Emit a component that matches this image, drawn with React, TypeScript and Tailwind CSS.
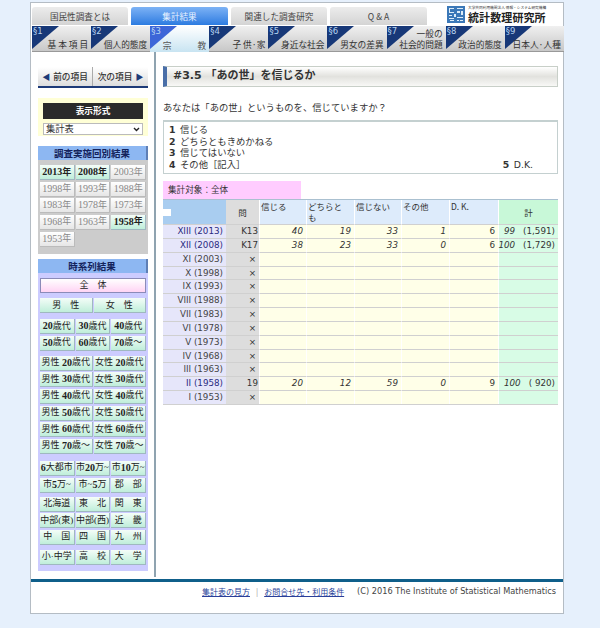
const font = { fontFamily: '"DejaVu Sans","Noto Sans CJK JP",sans-serif' };
const jp = { fontFamily: '"Noto Sans CJK JP",sans-serif' };
const serif = { fontFamily: '"Liberation Serif","Noto Sans CJK JP",serif' };

const sections = [
  ["§1", "基 本 項 目"], ["§2", "個人的態度"], ["§3", "宗　　　教"], ["§4", "子 供·家"], ["§5", "身近な社会"],
  ["§6", "男女の差異"], ["§7", "一般の\n社会的問題"], ["§8", "政治的態度"], ["§9", "日本人·人種"],
];

function Btn({ t, kind = "on" }: { t: string; kind?: "on" | "off" }) {
  const cls = kind === "on"
    ? "bg-gradient-to-b from-[#f4fdf8] to-[#bfeeda] text-[#222] border-[#9fb8c0]"
    : "bg-gradient-to-b from-white to-[#e6e6e6] text-[#888] border-[#bbbbbb]";
  return (
    <div className={`h-[15px] flex items-center justify-center border-b border-r whitespace-pre overflow-hidden text-[9px] leading-none ${cls}`} style={serif}>
      {t.split(/(\d+)/).map((p, i) =>
        /\d/.test(p)
          ? <span key={i} className={`text-[10px] ${kind === "on" ? "font-bold" : ""}`}>{p}</span>
          : <span key={i} className={kind === "on" && t.endsWith("年") ? "font-bold" : ""}>{p}</span>
      )}
    </div>
  );
}

function G({ cols, items, gap = "mt-[5px]" }: { cols: 2 | 3; items: string[]; gap?: string }) {
  return (
    <div className={`grid ${cols === 2 ? "grid-cols-2" : "grid-cols-3"} gap-x-px gap-y-[1.67px] ${gap}`}>
      {items.map((t) => <Btn key={t} t={t} />)}
    </div>
  );
}

const PanelHead = ({ t }: { t: string }) => (
  <div className="h-[14px] bg-[#8db7f2] border-r-2 border-[#5f7fb5] text-center text-[9.5px] leading-[14px] font-bold text-[#14235c]" style={jp}>{t}</div>
);

const rows: [string, string, string[], string, string, boolean][] = [
  ["XIII (2013)", "K13", ["40", "19", "33", "1", "6"], "99", "(1,591)", true],
  ["XII (2008)", "K17", ["38", "23", "33", "0", "6"], "100", "(1,729)", true],
  ["XI (2003)", "×", [], "", "", false],
  ["X (1998)", "×", [], "", "", false],
  ["IX (1993)", "×", [], "", "", false],
  ["VIII (1988)", "×", [], "", "", false],
  ["VII (1983)", "×", [], "", "", false],
  ["VI (1978)", "×", [], "", "", false],
  ["V (1973)", "×", [], "", "", false],
  ["IV (1968)", "×", [], "", "", false],
  ["III (1963)", "×", [], "", "", false],
  ["II (1958)", "19", ["20", "12", "59", "0", "9"], "100", "( 920)", true],
  ["I (1953)", "×", [], "", "", false],
];

const years = ["2013年", "2008年", "2003年", "1998年", "1993年", "1988年", "1983年", "1978年", "1973年", "1968年", "1963年", "1958年", "1953年"];
const onYears = ["2013年", "2008年", "1958年"];

function LogoMark() {
  return (
    <svg width="18" height="17" viewBox="0 0 18 17" className="shrink-0">
      <rect width="18" height="17" fill="#3b78b8" />
      <path d="M2 2h5v1H3v3h4v1H2zM10 2h6v1h-6zM10 5h3v2h-3zM14 5h2v4h-2zM2 9h3v1H2zM7 8h2v3H7zM2 12h5v1H2zM10 11h6v1h-6zM3 14h4v1H3zM10 14h2v1h-2zM13 14h3v1h-3z" fill="#dcecf8" />
    </svg>
  );
}

const cols = "grid grid-cols-[63px_33px_47px_48px_47px_48px_49px_60px]";
const Num = ({ n }: { n: number }) => <b className="inline-block w-[11px]" style={font}>{n}</b>;

export default function App() {
  return (
    <div className="w-[600px] h-[628px] overflow-hidden bg-[#e6f0fc] text-[#333] text-[10px] pt-[2px]" style={font}>
      <div className="ml-[30px] w-[534px] h-[612px] bg-white border border-[#b4bcc4] flex flex-col">
        {/* top nav */}
        <div className="h-[23px] flex items-end">
          <div className="flex pl-px pb-px">
            {[["国民性調査とは", 96], ["集計結果", 97], ["関連した調査研究", 96], ["Q & A", 97]].map(([t, w], i) => (
              <div key={t as string} style={{ width: w as number, ...jp }}
                className={`h-[18px] mr-[3px] rounded-t-[3px] flex items-center justify-center text-[8.6px] ${i === 1 ? "bg-gradient-to-b from-[#7cb2f5] to-[#2b7be0] text-[#e8f2ff]" : "bg-gradient-to-b from-[#ececec] to-[#d4d4d4] text-[#444]"}`}>
                {t}
              </div>
            ))}
          </div>
          <div className="ml-[17px] flex items-center gap-[3px] h-[22px] pb-px">
            <LogoMark />
            <div style={jp}>
              <div className="text-[3.7px] leading-[6px] text-[#333] whitespace-nowrap">大学共同利用機関法人 情報・システム研究機構</div>
              <div className="text-[11px] leading-[13px] font-bold text-[#222] whitespace-nowrap tracking-[0.1px]">統計数理研究所</div>
            </div>
          </div>
        </div>
        {/* section tabs */}
        <div className="flex h-[26px] ml-px">
          {sections.map(([n, t], i) => {
            const on = i === 2;
            return (
              <div key={n} className={`relative w-[59.1px] h-[26px] shrink-0 ${on ? "bg-gradient-to-b from-white to-[#c8e4f2]" : "bg-gradient-to-b from-[#f0f0f0] to-[#c8c8c8] border-b border-[#999]"}`}>
                <svg width="27" height="23" viewBox="0 0 27 23" className="absolute left-0 top-0">
                  <polygon points="0,0 27,0 0,23" fill={on ? "#3d66d8" : "#173878"} />
                </svg>
                <span className="absolute left-px top-0 text-[8.5px] leading-[11px] text-[#b8d4f0]">{n}</span>
                <div className={`absolute right-[3px] bottom-px text-right whitespace-pre text-[8.7px] leading-[11px] ${on ? "text-[#555]" : "text-[#333]"}`} style={jp}>{t}</div>
              </div>
            );
          })}
        </div>
        {/* body */}
        <div className="flex flex-1">
          <aside className="w-[125px] shrink-0 border-r-2 border-[#8fa3b0] pl-[7px] pt-[15px] h-[525px]">
            <div className="w-[110px]" style={jp}>
              <div className="flex h-[21px] border-b-2 border-[#1d3a78] bg-gradient-to-b from-white to-[#dddddd] font-medium text-[8.7px] text-[#333]">
                <div className="w-[55px] flex items-center justify-center gap-[3px] border-r border-[#aaa]"><span className="text-[#1d3a78] text-[8px]">◀</span>前の項目</div>
                <div className="w-[55px] flex items-center justify-center gap-[3px]">次の項目<span className="text-[#1d3a78] text-[8px]">▶</span></div>
              </div>
              <div className="mt-[10px] h-[38px] bg-[#ffffd6] px-[5px] pt-[5px]">
                <div className="h-[16px] bg-[#2a2a2a] text-white text-center font-bold text-[8.7px] leading-[16px]">表示形式</div>
                <div className="mt-[4px] h-[12px] bg-white border border-[#bbb] flex items-center justify-between px-[2px] text-[9.3px]">
                  <span>集計表</span>
                  <svg width="7" height="5" viewBox="0 0 7 5"><path d="M1 1l2.5 2.5L6 1" fill="none" stroke="#222" strokeWidth="1.4" /></svg>
                </div>
              </div>
              <div className="mt-[10px] bg-[#cccccc] h-[108px]">
                <PanelHead t="調査実施回別結果" />
                <div className="grid grid-cols-3 gap-x-px gap-y-[1.67px] px-[2px] pt-[5px]">
                  {years.map((y) => <Btn key={y} t={y} kind={onYears.includes(y) ? "on" : "off"} />)}
                </div>
              </div>
              <div className="mt-[5px] bg-[#ccccff] h-[312px]">
                <PanelHead t="時系列結果" />
                <div className="px-[2px] pt-[5px]">
                  <div className="h-[15px] flex items-center justify-center border border-[#8b8bb8] bg-gradient-to-b from-white to-[#ffd4f4] text-[9px] text-[#222]" style={serif}>全　体</div>
                  <G cols={2} items={["男　性", "女　性"]} />
                  <G cols={3} gap="mt-[6px]" items={["20歳代", "30歳代", "40歳代", "50歳代", "60歳代", "70歳～"]} />
                  <G cols={2} items={["男性 20歳代", "女性 20歳代", "男性 30歳代", "女性 30歳代", "男性 40歳代", "女性 40歳代", "男性 50歳代", "女性 50歳代", "男性 60歳代", "女性 60歳代", "男性 70歳～", "女性 70歳～"]} />
                  <G cols={3} gap="mt-[7px]" items={["6大都市", "市20万~", "市10万~", "市5万~", "市~5万", "郡　部"]} />
                  <G cols={3} gap="mt-[4px]" items={["北海道", "東　北", "関　東", "中部(東)", "中部(西)", "近　畿", "中　国", "四　国", "九　州"]} />
                  <G cols={3} items={["小·中学", "高　校", "大　学"]} />
                </div>
              </div>
            </div>
          </aside>
          <main className="pl-[7px] pt-[14px] w-[403px]">
            <div className="w-[395px] h-[21px] flex items-center border-y border-r border-[#c8cfc8] bg-gradient-to-b from-white via-[#e2e2de] to-[#f8f8f6] border-l-[4px] border-l-[#4a6fa8] pl-[6px] font-bold text-[11px] text-[#333]">#3.5 「あの世」を信じるか</div>
            <div className="mt-[13px] text-[9.33px] leading-[14px]" style={jp}>あなたは「あの世」というものを、信じていますか？</div>
            <div className="mt-[6px] w-[395px] h-[54px] border border-t-2 border-[#c4d0d0] px-[5px] pt-[2px] text-[9.33px] leading-[11.5px]" style={jp}>
              <div><Num n={1} />信じる</div>
              <div><Num n={2} />どちらともきめかねる</div>
              <div><Num n={3} />信じてはいない</div>
              <div className="flex justify-between pr-[19px]"><span><Num n={4} />その他［記入］</span><span><Num n={5} /><span style={font}>D.K.</span></span></div>
            </div>
            <div className="mt-[7px] w-[138px] h-[18px] bg-[#ffccff] pl-[5px] text-[8.6px] leading-[17px]" style={jp}>集計対象：全体</div>
            <div className="w-[395px] text-[8.75px] border-b border-[#d0d0d0]">
              <div className={`${cols} h-[25px] border-t border-[#aac0d0] text-[8.5px] leading-[10.5px]`} style={jp}>
                <div className="bg-[#a9cdf0] flex items-center"><div className="w-[8px] h-[7px] bg-white" /></div>
                <div className="bg-[#dddddd] flex items-center justify-center">問</div>
                {["信じる", "どちらと\nも", "信じない", "その他", "D. K."].map((t) => (
                  <div key={t} className="bg-[#ddebfb] border-l border-white pl-px pt-px whitespace-pre-line">{t}</div>
                ))}
                <div className="bg-[#c8f8d8] border-l border-white flex items-center justify-center">計</div>
              </div>
              {rows.map(([label, q, vals, total, n, on]) => (
                <div key={label} className={`${cols} h-[13.85px] leading-[13px]`}>
                  <div className={`bg-[#e6e6fa] border-t border-[#d0d0d0] text-right pr-[3px] whitespace-nowrap ${on ? "text-[#2a2a80]" : "text-[#444]"}`}>{label}</div>
                  <div className={`bg-[#dddddd] border-t border-[#d0d0d0] text-right ${on ? "pr-px" : "pr-[3px]"}`}>{q}</div>
                  {[0, 1, 2, 3, 4].map((i) => (
                    <div key={i} className={`bg-[#ffffe8] border-l border-l-white border-t border-t-[#d0d0d0] text-right pr-[3px] ${i === 4 ? "" : "italic"}`}>{vals[i]}</div>
                  ))}
                  <div className="bg-[#d8fce6] border-l border-l-white border-t border-t-[#d0d0d0] pr-[3px]">
                    {on && <div className="flex justify-end gap-[8px] whitespace-pre"><i>{total}</i><span>{n}</span></div>}
                  </div>
                </div>
              ))}
            </div>
          </main>
        </div>
        {/* footer */}
        <div className="border-t-[3px] border-[#0f5f8a] flex justify-between pl-[171px] pr-[7px] pt-[3px] h-[34px] text-[8.2px] leading-[13px] whitespace-nowrap">
          <div className="flex gap-[6px] text-[8px]" style={jp}>
            <span className="underline text-[#2a3f9a]">集計表の見方</span>
            <span className="text-[#999]">|</span>
            <span className="underline text-[#2a3f9a]">お問合せ先・利用条件</span>
          </div>
          <span className="text-[#444]">(C) 2016 The Institute of Statistical Mathematics</span>
        </div>
      </div>
    </div>
  );
}
